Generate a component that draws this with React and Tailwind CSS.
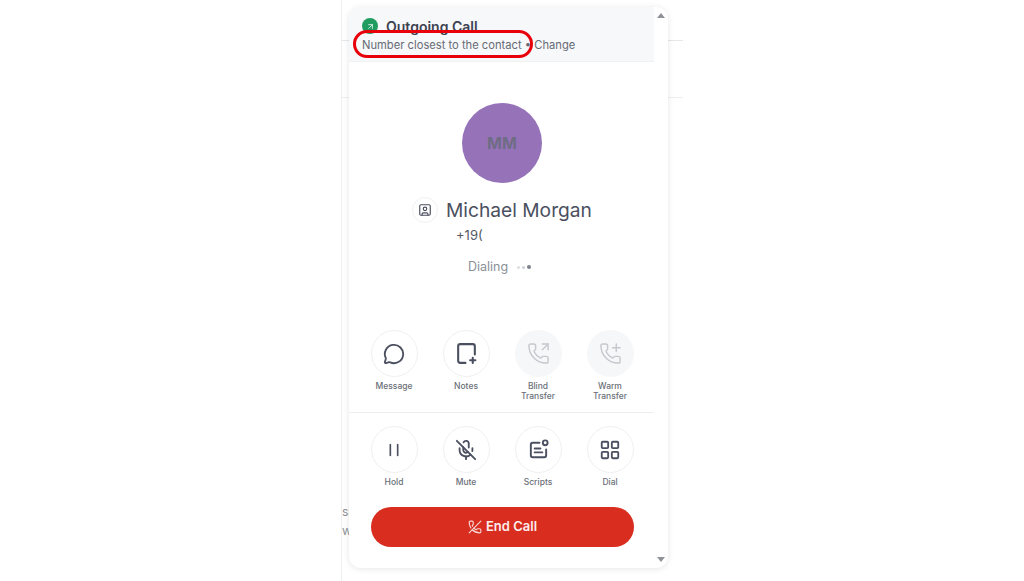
import { ArrowUpRight, MessageCircle, PhoneOutgoing, MicOff, LayoutGrid, PhoneOff, SquareUser } from 'lucide-react'

const PHONE = 'M13.832 16.568a1 1 0 0 0 1.213-.303l.355-.465A2 2 0 0 1 17 15h3a2 2 0 0 1 2 2v3a2 2 0 0 1-2 2A18 18 0 0 1 2 4a2 2 0 0 1 2-2h3a2 2 0 0 1 2 2v3a2 2 0 0 1-.8 1.6l-.468.351a1 1 0 0 0-.292 1.233 14 14 0 0 0 6.392 6.384'

function Svg({ children, size = 22, className = 'text-[#4b5060]' }) {
  return (
    <svg width={size} height={size} viewBox="0 0 24 24" fill="none" stroke="currentColor" strokeWidth="2" strokeLinecap="round" strokeLinejoin="round" className={className}>
      {children}
    </svg>
  )
}

function NotesIcon() {
  return (
    <Svg size={25}>
      <path d="M11 21H6a2 2 0 0 1-2-2V5a2 2 0 0 1 2-2h12a2 2 0 0 1 2 2v8" />
      <path d="M18 16v5M15.5 18.5h5" />
    </Svg>
  )
}

function WarmIcon() {
  return (
    <Svg size={23} className="text-[#c5c8ce]">
      <path d={PHONE} strokeWidth="1.5" />
      <path d="M18 2v8M14 6h8" strokeWidth="1.5" />
    </Svg>
  )
}

function HoldIcon() {
  return (
    <Svg>
      <path d="M8 6v12M16 6v12" strokeWidth="1.8" />
    </Svg>
  )
}

function ScriptsIcon() {
  return (
    <Svg size={23}>
      <path d="M13 5H6a2 2 0 0 0-2 2v11a2 2 0 0 0 2 2h12a2 2 0 0 0 2-2v-6" />
      <path d="M8 11h6M8 15h8" />
      <circle cx="19" cy="5" r="2.5" />
    </Svg>
  )
}

function Action({ icon, label, disabled }) {
  return (
    <div className="w-[72px] flex flex-col items-center">
      <div className={`w-[47px] h-[47px] rounded-full flex items-center justify-center ${disabled ? 'bg-[#f6f7f8]' : 'border border-[#eff0f2] bg-white'}`}>
        {icon}
      </div>
      <p className="mt-[2px] pt-[2px] text-[8.5px] leading-[10px] font-medium text-[#6b7079] text-center w-[46px]">{label}</p>
    </div>
  )
}

export default function App() {
  return (
    <div className="relative w-[1024px] h-[581px] overflow-hidden bg-white font-['Inter',sans-serif]">
      {/* page behind the dialer */}
      <div className="ml-[341px] w-[342px] h-full border-l border-[#eeeff1]">
        <div className="h-[41px] border-b border-[#e6e7ea]" />
        <div className="h-[57px] border-b border-[#eeeff1]" />
        <div className="pt-[404px] pl-0 text-[12px] leading-[19px] text-[#8d9199]">
          <p>si</p>
          <p>w</p>
        </div>
      </div>

      {/* dialer card */}
      <div className="absolute left-[349px] top-[7px] w-[319px] h-[561px] flex rounded-xl bg-white overflow-hidden shadow-[0_1px_6px_rgba(0,0,0,0.1)]">
        <div className="w-[305px] flex flex-col">
          <div className="h-[55px] bg-[#f7f8fa] border-b border-[#f0f1f3] pl-[13px] pt-[11px]">
            <div className="flex items-center gap-[8px] h-[16px]">
              <div className="w-[16px] h-[16px] rounded-full bg-[#1f9d61] flex items-center justify-center">
                <ArrowUpRight size={9} className="text-white" />
              </div>
              <p className="text-[14px] font-semibold text-[#3d4250]">Outgoing Call</p>
            </div>
            <p className="mt-[3px] text-[11.2px] leading-[16px] text-[#666b75] whitespace-nowrap">Number closest to the contact • Change</p>
          </div>

          <div className="mt-[41px] ml-[113px] w-[80px] h-[80px] rounded-full bg-[#9673b9] flex items-center justify-center">
            <span className="text-[16px] font-bold text-[#6f6c85]">MM</span>
          </div>

          <div className="mt-[14px] ml-[63px] flex items-center h-[26px]">
            <div className="w-[26px] h-[26px] rounded-full border border-[#f0f1f3] flex items-center justify-center">
              <SquareUser size={14} className="text-[#4b5060]" />
            </div>
            <p className="ml-[8px] text-[19.2px] text-[#4b5060] whitespace-nowrap">Michael Morgan</p>
          </div>
          <p className="mt-[3px] ml-[107px] text-[13px] leading-[18px] text-[#555a65]">+19(</p>

          <div className="mt-[14px] ml-[119px] flex items-center h-[18px]">
            <span className="text-[12.5px] text-[#8a8f98]">Dialing</span>
            <span className="ml-[9px] flex items-center gap-[2px]">
              <i className="w-[3px] h-[3px] rounded-full bg-[#dcdee2]" />
              <i className="w-[3px] h-[3px] rounded-full bg-[#cdd0d5]" />
              <i className="w-[4px] h-[4px] rounded-full bg-[#7d828c]" />
            </span>
          </div>

          <div className="mt-[54px] pl-[9px] flex">
            <Action icon={<MessageCircle size={22} className="text-[#4b5060]" />} label="Message" />
            <Action icon={<NotesIcon />} label="Notes" />
            <Action icon={<PhoneOutgoing size={23} strokeWidth={1.5} className="text-[#c5c8ce]" />} label="Blind Transfer" disabled />
            <Action icon={<WarmIcon />} label="Warm Transfer" disabled />
          </div>

          <div className="mt-[11px] border-t border-[#eceef0]" />

          <div className="mt-[13px] pl-[9px] flex">
            <Action icon={<HoldIcon />} label="Hold" />
            <Action icon={<MicOff size={22} className="text-[#4b5060]" />} label="Mute" />
            <Action icon={<ScriptsIcon />} label="Scripts" />
            <Action icon={<LayoutGrid size={22} className="text-[#4b5060]" />} label="Dial" />
          </div>

          <div className="mt-[20px] ml-[22px] w-[263px] h-[40px] rounded-[20px] bg-[#d92d20] flex items-center justify-center gap-[4px]">
            <PhoneOff size={14} className="text-[#f5d5d2]" />
            <span className="text-[13px] font-semibold text-[#fbeeed]">End Call</span>
          </div>
        </div>

        {/* scrollbar */}
        <div className="flex-1 flex flex-col items-center justify-between pt-[6px] pb-[6px]">
          <div className="w-0 h-0 border-x-[4px] border-x-transparent border-b-[5px] border-b-[#8f9298]" />
          <div className="w-0 h-0 border-x-[4px] border-x-transparent border-t-[5px] border-t-[#8f9298]" />
        </div>
      </div>

      {/* red annotation */}
      <div className="absolute left-[353px] top-[30px] w-[180px] h-[28px] rounded-[14px] border-[3px] border-[#e8000b]" />
    </div>
  )
}
